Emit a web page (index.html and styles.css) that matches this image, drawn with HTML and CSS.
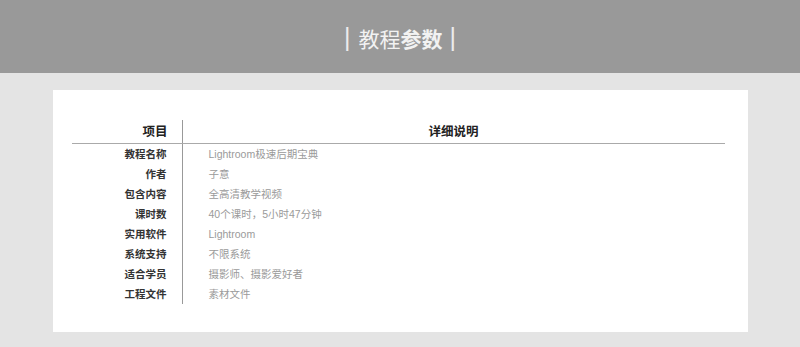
FILE: index.html
```html
<!DOCTYPE html>
<html lang="zh">
<head>
<meta charset="utf-8">
<link rel="stylesheet" href="styles.css">
</head>
<body>
<header class="banner">
  <h1 class="title"><span class="bar">|</span><span class="words">教程<b>参数</b></span><span class="bar">|</span></h1>
</header>
<main class="card">
  <table class="params">
    <thead>
      <tr><th class="key">项目</th><th class="val">详细说明</th></tr>
    </thead>
    <tbody>
      <tr><td class="key">教程名称</td><td class="val">Lightroom极速后期宝典</td></tr>
      <tr><td class="key">作者</td><td class="val">子意</td></tr>
      <tr><td class="key">包含内容</td><td class="val">全高清教学视频</td></tr>
      <tr><td class="key">课时数</td><td class="val">40个课时，5小时47分钟</td></tr>
      <tr><td class="key">实用软件</td><td class="val">Lightroom</td></tr>
      <tr><td class="key">系统支持</td><td class="val">不限系统</td></tr>
      <tr><td class="key">适合学员</td><td class="val">摄影师、摄影爱好者</td></tr>
      <tr><td class="key">工程文件</td><td class="val">素材文件</td></tr>
    </tbody>
  </table>
</main>
</body>
</html>
```

FILE: styles.css
```css
html, body {
  margin: 0;
  padding: 0;
}
body {
  background: #e4e4e4;
  font-family: "Noto Sans CJK SC", "Noto Sans", sans-serif;
  height: 347px;
  overflow: hidden;
}
.banner {
  background: #999999;
  height: 73px;
  display: flex;
  align-items: center;
  justify-content: center;
}
.title {
  margin: 0;
  padding-top: 4px;
  display: flex;
  align-items: center;
  font-size: 21px;
  font-weight: 400;
  color: #f2f2f2;
  line-height: 1;
}
.title b {
  font-weight: 700;
}
.title .words {
  margin: 0 7px 0 8px;
}
.title .bar {
  font-family: "Liberation Sans", sans-serif;
  font-size: 25px;
  font-weight: 400;
  color: #ececec;
  position: relative;
  top: -1px;
}
.card {
  width: 695px;
  margin: 17px auto 0;
  background: #ffffff;
  box-sizing: border-box;
  padding: 30px 23px 28px 19px;
}
.params {
  width: 653px;
  border-collapse: collapse;
}
.params th, .params td {
  padding: 0;
}
.params th {
  height: 23px;
  font-size: 12.5px;
  font-weight: 700;
  color: #222;
  border-bottom: 1px solid #aaaaaa;
  line-height: 1;
}
.params th.key {
  text-align: right;
  padding-right: 14px;
  width: 96px;
}
.params th.val {
  text-align: center;
}
.params td {
  height: 20px;
  line-height: 1;
}
.params .key {
  border-right: 1px solid #999999;
}
.params td.key {
  text-align: right;
  padding-right: 15px;
  font-size: 10.5px;
  font-weight: 700;
  color: #333;
}
.params td.val {
  padding-left: 26px;
  font-family: "Liberation Sans", "Noto Sans CJK SC", sans-serif;
  font-size: 10.5px;
  color: #9a9a9a;
}
```
